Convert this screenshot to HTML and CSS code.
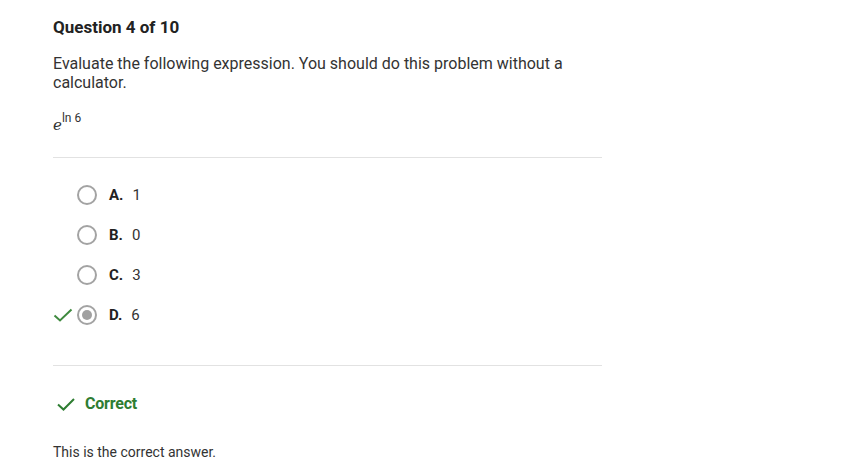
FILE: index.html
```html
<!DOCTYPE html>
<html>
<head>
<meta charset="utf-8">
<link rel="stylesheet" href="styles.css">
</head>
<body>
<div class="page">
  <h1 class="title">Question 4 of 10</h1>
  <p class="prompt">Evaluate the following expression. You should do this problem without a calculator.</p>
  <p class="expr"><i>e</i><sup>ln 6</sup></p>
  <hr class="divider">
  <ul class="options">
    <li class="option"><span class="mark"></span><span class="radio"></span><b>A.</b><span class="val">1</span></li>
    <li class="option"><span class="mark"></span><span class="radio"></span><b>B.</b><span class="val">0</span></li>
    <li class="option"><span class="mark"></span><span class="radio"></span><b>C.</b><span class="val">3</span></li>
    <li class="option"><span class="mark"><svg width="20" height="14" viewBox="0 0 20 14"><path d="M1.5 7.5 L7 12.5 L18.5 1.5" fill="none" stroke="#3f8a3f" stroke-width="2"/></svg></span><span class="radio checked"></span><b>D.</b><span class="val">6</span></li>
  </ul>
  <hr class="divider second">
  <div class="result"><svg width="18" height="13" viewBox="0 0 18 13"><path d="M1 6.5 L6.5 11.5 L17 1" fill="none" stroke="#2e7d32" stroke-width="2"/></svg><span>Correct</span></div>
  <p class="explain">This is the correct answer.</p>
</div>
</body>
</html>
```
FILE: styles.css
```css
* { box-sizing: border-box; }
body {
  margin: 0;
  background: #fff;
  font-family: Roboto, "Liberation Sans", sans-serif;
  color: #333;
}
.page {
  width: 602px;
  padding: 16px 0 0 53px;
}
.title {
  margin: 0;
  font-size: 17px;
  font-weight: 700;
  color: #222;
  line-height: 22px;
}
.prompt {
  margin: 16px 0 0;
  font-size: 16px;
  line-height: 19px;
  color: #333;
  width: 530px;
}
.expr {
  margin: 23px 0 0;
  font-size: 15px;
  line-height: 20px;
  color: #333;
}
.expr i { font-family: "DejaVu Serif", "Liberation Serif", serif; font-size: 15px; }
.expr sup { font-size: 12px; vertical-align: 8px; line-height: 0; }
.divider {
  margin: 22px 0 0;
  border: 0;
  border-top: 1px solid #e2e2e2;
}
.options {
  list-style: none;
  margin: 0;
  padding: 17px 0 0;
}
.option {
  display: flex;
  align-items: center;
  height: 40px;
  font-size: 15px;
  color: #333;
}
.mark {
  width: 24px;
  display: flex;
  align-items: center;
}
.radio {
  width: 20px;
  height: 20px;
  border: 2px solid #a3a3a3;
  border-radius: 50%;
  margin-right: 12px;
  display: flex;
  align-items: center;
  justify-content: center;
}
.radio.checked::after {
  content: "";
  width: 10px;
  height: 10px;
  border-radius: 50%;
  background: #a0a0a0;
}
.option b { font-weight: 700; color: #222; }
.val { margin-left: 9px; }
.divider.second { margin-top: 30px; }
.result {
  display: flex;
  align-items: center;
  gap: 10px;
  margin: 28px 0 0 4px;
  font-size: 16px;
  font-weight: 700;
  color: #2e7d32;
  line-height: 20px;
  letter-spacing: -0.2px;
}
.explain {
  margin: 29px 0 0;
  font-size: 14px;
  color: #333;
  line-height: 18px;
}
```
